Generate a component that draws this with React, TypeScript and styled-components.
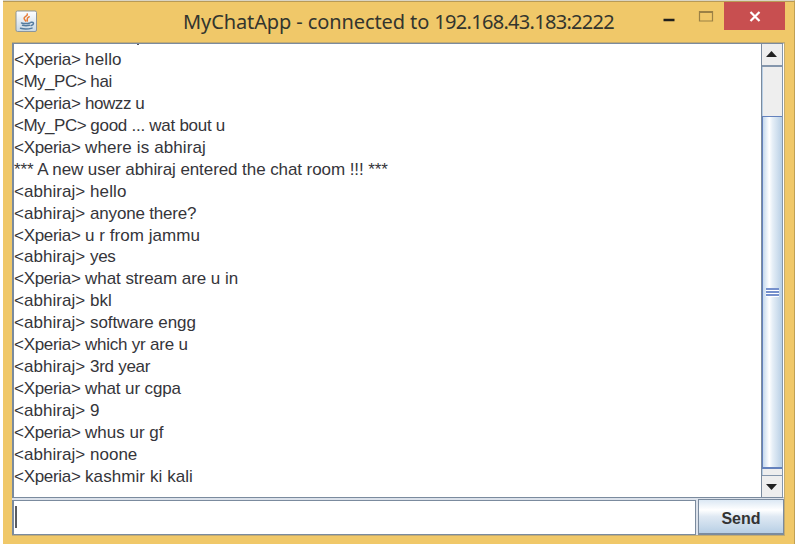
import React from 'react';
import styled, { createGlobalStyle } from 'styled-components';

const GlobalStyle = createGlobalStyle`
  * { box-sizing: border-box; }
  body { margin: 0; background: #fff; overflow: hidden; }
`;

const Frame = styled.main`
  width: 792px;
  height: 544px;
  margin-left: 3px;
  display: flex;
  flex-direction: column;
  background: #f0c869;
  border-top: 1px solid #d9d4c4;
  border-right: 1px solid #c0a054;
  box-shadow: inset 0 1px #b89a56;
`;

const TitleBar = styled.header`
  height: 41px;
  flex: none;
  display: flex;
  align-items: flex-start;
`;

const AppIcon = styled.svg`
  width: 23px;
  height: 23px;
  margin: 9px 0 0 12px;
  flex: none;
`;

const Title = styled.h1`
  width: 449px;
  margin: 6px 0 0 145px;
  font: 400 20px/30px "Noto Sans", "Open Sans", sans-serif;
  color: #33352e;
  white-space: pre;
  flex: none;
`;

const WindowButtons = styled.div`
  display: flex;
  margin-left: 18px;
`;

const WindowButton = styled.button<{ $close?: boolean }>`
  width: ${p => (p.$close ? 61 : 37)}px;
  height: 28px;
  margin-top: 1px;
  padding: 0;
  border: 0;
  background: ${p => (p.$close ? '#c84f50' : 'transparent')};
  svg { display: block; width: 100%; height: 100%; }
`;

const Content = styled.section`
  width: 773px;
  height: 494px;
  margin: 0 0 0 9px;
  background: #dce2eb;
  border: 1px solid #c3ab70;
  border-width: 1px 1px 1px 0;
  display: flex;
  flex-direction: column;
`;

const ScrollPane = styled.div`
  height: 455px;
  width: 772px;
  display: flex;
  border: 1px solid #7b8b9e;
  border-left-width: 2px;
  border-right-color: #fff;
  background: #fff;
  flex: none;
`;

const Messages = styled.div`
  flex: 1;
  overflow: hidden;
  color: #35353a;
  font: 400 17px/21.95px "Liberation Sans", Arial, sans-serif;
`;

const ClippedLine = styled.div`
  width: 2px;
  height: 1px;
  margin: 0 0 4px 123px;
  background: #55565c;
`;

const Message = styled.div`
  height: 21.95px;
  white-space: pre;
`;

const Tracked = styled.span<{ $tracking: number }>`
  letter-spacing: ${p => p.$tracking}px;
`;

const Scrollbar = styled.div`
  width: 22px;
  display: flex;
  flex-direction: column;
  border-left: 1px solid #7b8b9e;
  border-right: 1px solid #8496ac;
  background: #eee;
`;

const Arrow = styled.svg`
  width: 100%;
  height: 21px;
  display: block;
  background: #eee;
  flex: none;
`;

const Track = styled.div`
  flex: 1;
  border: solid #8496ac;
  border-width: 2px 0 1px;
  padding-top: 49px;
  background: linear-gradient(90deg, #b8cfe5 1px, #eee 1px);
`;

const Thumb = styled.div`
  height: 353px;
  border: 1px solid #6482bd;
  border-width: 1px 0 2px 1px;
  background: linear-gradient(90deg, #c5d9ed, #fff 33%, #e6eff7 50%, #b8cfe5);
  display: flex;
  align-items: center;
  justify-content: center;
`;

const Grip = styled.div`
  width: 13px;
  height: 9px;
  background: repeating-linear-gradient(#7590cc 0 2px, #fff 2px 3px);
`;

const Composer = styled.form`
  margin-top: 1px;
  height: 37px;
  display: flex;
`;

const Field = styled.div`
  width: 684px;
  height: 35px;
  margin-top: 1px;
  border: 1px solid #7b8b9e;
  border-left-width: 2px;
  background: #fff;
  padding: 5px 0 0 1px;
`;

const Caret = styled.div`
  width: 2px;
  height: 22px;
  background: #595c61;
`;

const SendButton = styled.button`
  width: 86px;
  height: 36px;
  margin-left: 2px;
  padding: 4px 0 0;
  border: 1px solid #7b8b9e;
  border-bottom-width: 2px;
  background: linear-gradient(#dce8f4, #fff 30%, #dfe9f3 50%, #b8cfe5);
  color: #333;
  font: 700 16px "Liberation Sans", Arial, sans-serif;
`;

type Line = [nick: string, text: string, tracking: number];

const nickTracking: Record<string, number> = {
  '<Xperia> ': -0.3,
  '<My_PC> ': -0.5,
  '<abhiraj> ': 0.04,
};

const messages: Line[] = [
  ['<Xperia> ', 'hello', 0.15],
  ['<My_PC> ', 'hai', -0.3],
  ['<Xperia> ', 'howzz u', -0.45],
  ['<My_PC> ', 'good ... wat bout u', -0.27],
  ['<Xperia> ', 'where is abhiraj', 0.12],
  ['', '*** A new user abhiraj entered the chat room !!! ***', -0.08],
  ['<abhiraj> ', 'hello', 0.12],
  ['<abhiraj> ', 'anyone there?', -0.18],
  ['<Xperia> ', 'u r from jammu', 0.05],
  ['<abhiraj> ', 'yes', -0.35],
  ['<Xperia> ', 'what stream are u in', -0.05],
  ['<abhiraj> ', 'bkl', 0],
  ['<abhiraj> ', 'software engg', -0.08],
  ['<Xperia> ', 'which yr are u', -0.23],
  ['<abhiraj> ', '3rd year', -0.28],
  ['<Xperia> ', 'what ur cgpa', -0.12],
  ['<abhiraj> ', '9', 0],
  ['<Xperia> ', 'whus ur gf', 0],
  ['<abhiraj> ', 'noone', 0],
  ['<Xperia> ', 'kashmir ki kali', 0.08],
];

const JavaIcon = () => (
  <AppIcon viewBox="0 0 23 23">
    <defs>
      <linearGradient id="tile" x2="0" y2="1">
        <stop stopColor="#fff" />
        <stop offset="1" stopColor="#c7d7e3" />
      </linearGradient>
    </defs>
    <rect x="1" y="1" width="20.5" height="20.5" rx="1.5" fill="url(#tile)" stroke="#8b959a" />
    <g fill="none" strokeLinecap="round">
      <path d="M12.3 4c.8 2.300-3.800 2.600-3.200 4.700.2 1 1.300 1.500 1.600 2.400M14.200 6.800c-3.300 1.300-1.500 2.200-2 4.200" stroke="#e77b35" strokeWidth="1.500" />
      <path d="M6.500 13c2 .6 6 .6 8.500 0M7.500 15.200c2 .5 5 .5 7 0M5.500 18.300c3 .8 8 .8 11.500-.2M16 12.300c3.500-.8 3 2.600.2 3.200" stroke="#537b9e" strokeWidth="1.500" />
    </g>
  </AppIcon>
);

export default function App() {
  return (
    <>
      <GlobalStyle />
      <Frame>
        <TitleBar>
          <JavaIcon />
          <Title>
            <Tracked $tracking={-0.1}>{'MyChatApp - connected to '}</Tracked>
            <Tracked $tracking={-0.7}>192.168.43.183:2222</Tracked>
          </Title>
          <WindowButtons>
            <WindowButton aria-label="Minimize">
              <svg viewBox="0 0 37 28"><path d="M13.500 18h11" stroke="#20201c" strokeWidth="2.500" /></svg>
            </WindowButton>
            <WindowButton aria-label="Maximize">
              <svg viewBox="0 0 37 28"><path d="M12.500 9.500h13v9.500h-13zM12.500 10.500h13" fill="none" stroke="#9b8145" strokeWidth="1.200" /></svg>
            </WindowButton>
            <WindowButton $close aria-label="Close">
              <svg viewBox="0 0 61 28"><path d="M26.500 10l9 9M35.500 10l-9 9" stroke="#fff" strokeWidth="2.200" /></svg>
            </WindowButton>
          </WindowButtons>
        </TitleBar>
        <Content>
          <ScrollPane>
            <Messages>
              <ClippedLine />
              {messages.map(([nick, text, tracking]) => (
                <Message key={nick + text}>
                  {nick && <Tracked $tracking={nickTracking[nick]}>{nick}</Tracked>}
                  <Tracked $tracking={tracking}>{text}</Tracked>
                </Message>
              ))}
            </Messages>
            <Scrollbar>
              <Arrow viewBox="0 0 20 21"><path d="M4 13l5.500-6L15 13z" fill="#222" /></Arrow>
              <Track><Thumb><Grip /></Thumb></Track>
              <Arrow viewBox="0 0 20 21"><path d="M4 8l5.500 6L15 8z" fill="#222" /></Arrow>
            </Scrollbar>
          </ScrollPane>
          <Composer>
            <Field><Caret /></Field>
            <SendButton type="button">Send</SendButton>
          </Composer>
        </Content>
      </Frame>
    </>
  );
}
